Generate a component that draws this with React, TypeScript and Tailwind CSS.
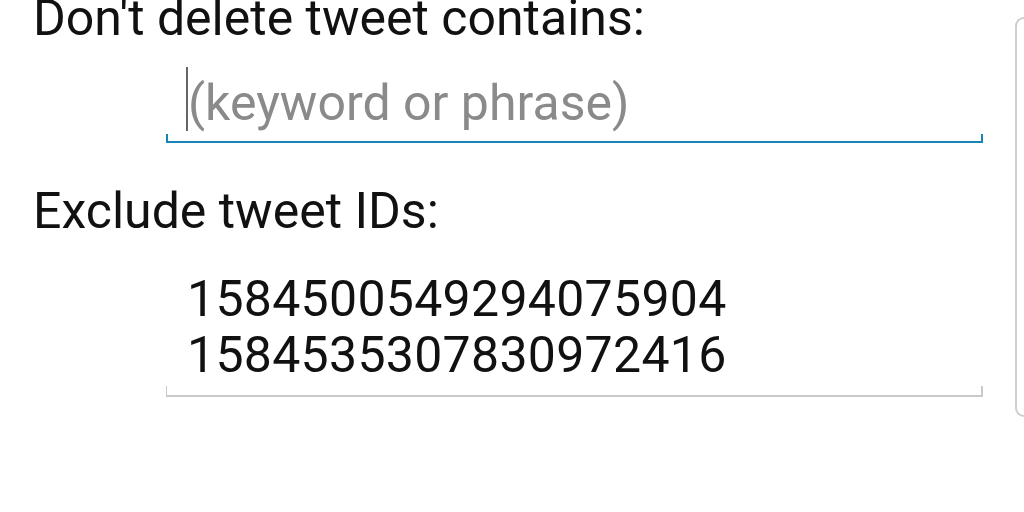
export default function App() {
  return (
    <div
      className="w-[1024px] h-[512px] bg-white flex overflow-hidden"
      style={{ fontFamily: "Roboto, 'Noto Sans', sans-serif" }}
    >
      <div className="flex-1 pl-[33px] text-[50px] leading-[56px]">
        {/* Keyword field */}
        <div className="text-[#111] mt-[-10px] whitespace-nowrap">Don't delete tweet contains:</div>

        <div className="ml-[133px] w-[817px] mt-[29px]">
          <div className="flex items-start pl-[20px] text-[#8a8a8a] whitespace-nowrap">
            <span className="w-[2px] h-[64px] mt-[-8px] bg-[#666] shrink-0" />
            <span>(keyword or phrase)</span>
          </div>
          <div className="h-[9px] mt-[3px] border-b-[2px] border-l-[2px] border-r-[2px] border-[#1686b6]" />
        </div>

        {/* Excluded IDs */}
        <div className="text-[#111] mt-[40px] whitespace-nowrap">Exclude tweet IDs:</div>

        <div className="ml-[133px] w-[817px] mt-[32px]">
          <div className="pl-[21px] text-[#111] tracking-[0.3px]">
            <div>1584500549294075904</div>
            <div>1584535307830972416</div>
          </div>
          <div className="h-[11px] mt-[3px] border-b-[2px] border-l-[1px] border-r-[2px] border-[#cacaca]" />
        </div>
      </div>
      <div className="w-[9px] mt-[17px] h-[400px] border-l-[2px] border-t-[2px] border-b-[2px] border-[#cfcfcf] rounded-l-[14px]" />
    </div>
  );
}
